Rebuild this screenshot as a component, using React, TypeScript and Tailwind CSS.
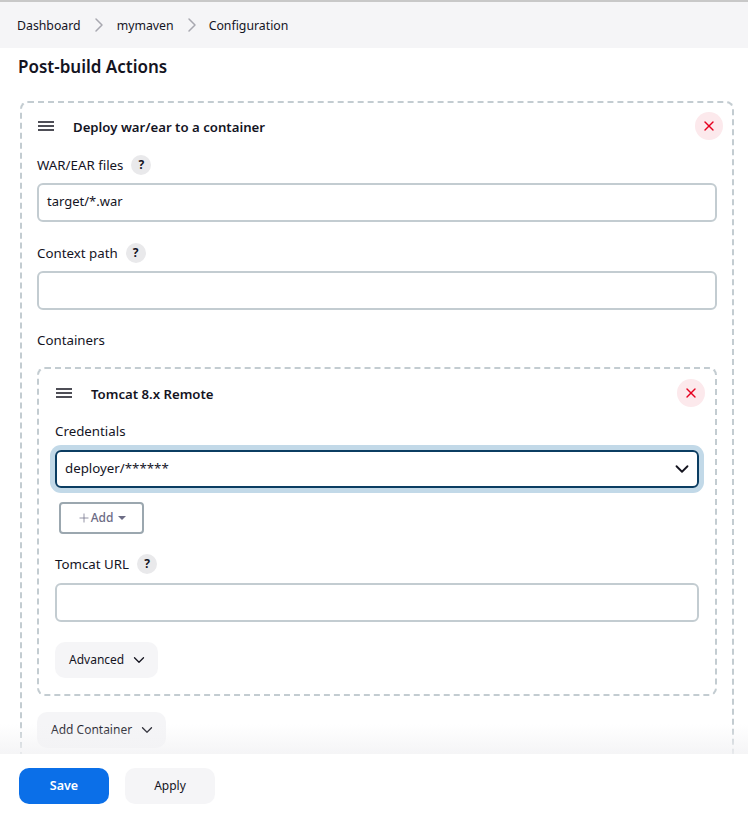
import { X, ChevronDown, ChevronRight, Plus } from 'lucide-react';

function Help() {
  return (
    <span className="w-[20px] h-[20px] rounded-full bg-[#e9e9eb] flex items-center justify-center text-[12px] font-bold text-[#14141f] leading-none">
      ?
    </span>
  );
}

function Label({ text, help }: { text: string; help?: boolean }) {
  return (
    <div className="flex items-center gap-[8px] h-[22px] text-[13.3px] text-[#14141f]">
      <span className="pt-[2px]">{text}</span>
      {help && <Help />}
    </div>
  );
}

function TextBox({ value }: { value?: string }) {
  return (
    <div className="h-[39px] border-2 border-[#c3ccd1] rounded-[6px] bg-white flex items-center px-2 text-[13px] text-[#14141f]">
      <span className="mt-[-1px]">{value}</span>
    </div>
  );
}

function Header({ title }: { title: string }) {
  return (
    <div className="flex items-center h-[28px]">
      <svg className="shrink-0 mr-[20px] ml-[1px]" width="16" height="10" viewBox="0 0 16 10">
        <path d="M0 1h16M0 5h16M0 9h16" stroke="#14141f" strokeWidth="1.5" fill="none" />
      </svg>
      <span className="flex-1 ml-[-1px] pt-[3px] text-[13.2px] font-semibold text-[#14141f]">{title}</span>
      <span className="w-[28px] h-[28px] mr-[-6px] rounded-full bg-[#fce9ec] flex items-center justify-center">
        <X className="w-[16px] h-[16px] text-[#e6001f]" strokeWidth={2} />
      </span>
    </div>
  );
}

function GrayButton({ text, w }: { text: string; w: string }) {
  return (
    <div className={`${w} h-[36px] rounded-[10px] bg-[#f5f5f7] flex items-center pl-[14px] gap-[6px] text-[12px] text-[#14141f]`}>
      <span>{text}</span>
      <ChevronDown className="w-[18px] h-[18px]" strokeWidth={1.75} />
    </div>
  );
}

export default function App() {
  return (
    <div className="relative w-[748px] h-[817px] overflow-hidden bg-white font-['Noto_Sans',sans-serif]">
      <div className="h-[2px] bg-[#c8c8c8]" />
      <div className="h-[46px] bg-[#f5f5f7] flex items-center pl-[17px] text-[12.3px] text-[#14141f]">
        <span className="pt-[3px]">Dashboard</span>
        <ChevronRight className="w-[24px] h-[24px] text-[#a8a8b0] mx-[6px]" strokeWidth={1.5} />
        <span className="pt-[3px]">mymaven</span>
        <ChevronRight className="w-[24px] h-[24px] text-[#a8a8b0] mx-[6px]" strokeWidth={1.5} />
        <span className="pt-[3px] ml-[-1px]">Configuration</span>
      </div>

      <div className="pl-[18px] pr-[14px]">
        <h2 className="h-[38px] flex items-center text-[17px] font-semibold text-[#14141f] mb-[15px]">Post-build Actions</h2>

        <div className="ml-[2px] border-2 border-dashed border-[#c3ccd1] rounded-[8px] pt-[9px] px-[15px] h-[760px]">
          <Header title="Deploy war/ear to a container" />
          <div className="mt-[14px]">
            <Label text="WAR/EAR files" help />
          </div>
          <div className="mt-[7px]">
            <TextBox value="target/*.war" />
          </div>
          <div className="mt-[20px]">
            <Label text="Context path" help />
          </div>
          <div className="mt-[7px]">
            <TextBox />
          </div>
          <div className="mt-[19px]">
            <Label text="Containers" />
          </div>

          <div className="mt-[16px] border-2 border-dashed border-[#c3ccd1] rounded-[8px] pt-[10px] px-[16px] h-[329px]">
            <Header title="Tomcat 8.x Remote" />
            <div className="mt-[13px]">
              <Label text="Credentials" />
            </div>
            <div className="mt-[8px] h-[38px] border-2 border-[#0b3d62] rounded-[6px] shadow-[0_0_0_5px_#c2d9e8] flex items-center justify-between px-2 text-[13.3px] text-[#14141f]">
              <span className="mt-[-1px]">deployer/******</span>
              <ChevronDown className="w-[22px] h-[22px] mr-[-4px]" strokeWidth={2} />
            </div>
            <div className="mt-[14px] ml-[4px] w-[85px] h-[32px] border-2 border-[#9ba7af] rounded-[4px] flex items-center justify-center text-[12px] font-medium text-[#6c6c85]">
              <Plus className="w-[14px] h-[14px]" strokeWidth={1.25} />
              <span>Add</span>
              <svg className="ml-[5px]" width="8" height="4" viewBox="0 0 8 4">
                <path d="M0 0h8L4 4z" fill="#6c6c85" />
              </svg>
            </div>
            <div className="mt-[19px]">
              <Label text="Tomcat URL" help />
            </div>
            <div className="mt-[8px]">
              <TextBox />
            </div>
            <div className="mt-[20px]">
              <GrayButton text="Advanced" w="w-[103px]" />
            </div>
          </div>

          <div className="mt-[16px]">
            <GrayButton text="Add Container" w="w-[129px]" />
          </div>
        </div>
      </div>

      {/* sticky save bar */}
      <div className="absolute left-0 right-0 bottom-0">
        <div className="h-[30px] bg-gradient-to-b from-transparent to-[#f2f2f4]/80" />
        <div className="h-[63px] bg-white flex items-start pt-[14px] pl-[19px] gap-[16px]">
          <div className="w-[90px] h-[36px] rounded-[10px] bg-[#0b6fe8] text-white font-semibold flex items-center justify-center text-[12.5px]">
            Save
          </div>
          <div className="w-[90px] h-[36px] rounded-[10px] bg-[#f5f5f7] text-[#14141f] flex items-center justify-center text-[12px]">
            Apply
          </div>
        </div>
      </div>
    </div>
  );
}
